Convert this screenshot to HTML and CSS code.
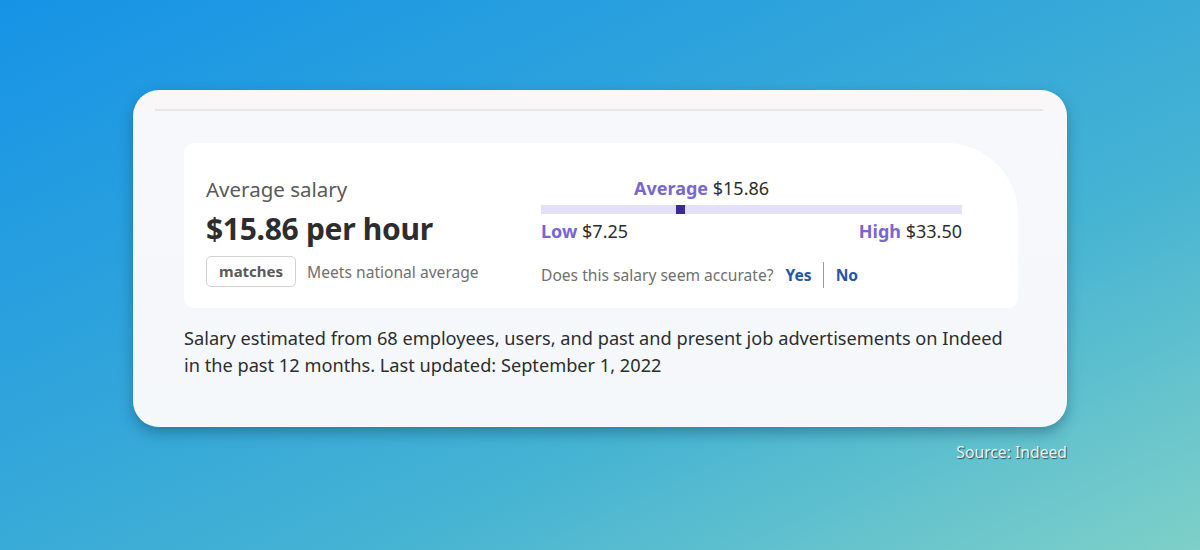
FILE: index.html
```html
<!DOCTYPE html>
<html lang="en">
<head>
    <meta charset="UTF-8">
    <meta name="viewport" content="width=device-width, initial-scale=1.0">
    <title>Average Salary</title>
    <link rel="stylesheet" href="styles.css">
</head>
<body>

    <div class="stage">
        <!-- Salary card -->
        <div class="card">
            <div class="card-rule"></div>

            <div class="salary-box">
                <div class="salary-left">
                    <div class="salary-label">Average salary</div>
                    <div class="salary-value">$15.86 per hour</div>
                    <div class="salary-match">
                        <span class="pill">matches</span>
                        <span class="match-text">Meets national average</span>
                    </div>
                </div>

                <div class="salary-right">
                    <div class="avg-label"><b>Average</b> $15.86</div>
                    <div class="range-bar">
                        <span class="range-marker"></span>
                    </div>
                    <div class="range-ends">
                        <span><b>Low</b> $7.25</span>
                        <span><b>High</b> $33.50</span>
                    </div>
                    <div class="feedback">
                        <span class="feedback-q">Does this salary seem accurate?</span>
                        <a class="feedback-btn">Yes</a>
                        <span class="feedback-sep"></span>
                        <a class="feedback-btn">No</a>
                    </div>
                </div>
            </div>

            <p class="salary-note">Salary estimated from 68 employees, users, and past and present job advertisements on Indeed in the past 12 months. Last updated: September 1, 2022</p>
        </div>

        <div class="source">Source: Indeed</div>
    </div>

</body>
</html>
```

FILE: styles.css
```css
body {
    margin: 0;
    height: 550px;
    overflow: hidden;
    font-family: "Noto Sans", "Open Sans", sans-serif;
    background: linear-gradient(155deg, #1693e6 0%, #2ea3dc 35%, #45b3d3 65%, #7ed0c8 100%);
}
.stage {
    width: 934px;
    margin: 0 auto;
    padding-top: 90px;
}
.card {
    height: 337px;
    box-sizing: border-box;
    background: linear-gradient(180deg, #faf7f7 0px, #f6f8fb 40px, #f5f8fb 100%);
    border-radius: 26px;
    box-shadow: 0 6px 14px rgba(10, 60, 90, 0.4);
    padding: 19px 24px 0 22px;
}
.card-rule {
    height: 2px;
    background: #e9e5e5;
}
.salary-box {
    margin: 32px 25px 0 29px;
    height: 165px;
    box-sizing: border-box;
    background: #fff;
    border-radius: 10px 72px 10px 10px;
    display: flex;
    padding: 33px 0 0 22px;
}
.salary-left {
    width: 335px;
}
.salary-label {
    font-size: 20.5px;
    color: #595959;
    line-height: 26px;
}
.salary-value {
    font-size: 30px;
    font-weight: 700;
    color: #2d2d2d;
    line-height: 42px;
    margin-top: 6px;
    letter-spacing: -0.3px;
}
.salary-match {
    display: flex;
    align-items: center;
    margin-top: 6px;
}
.pill {
    border: 1px solid #d4d2d0;
    border-radius: 5px;
    padding: 4px 12px 5px;
    font-size: 15px;
    font-weight: 700;
    color: #595959;
}
.match-text {
    margin-left: 11px;
    font-size: 15.6px;
    color: #6f6f6f;
}
.salary-right {
    width: 421px;
}
.avg-label {
    padding-left: 93px;
    font-size: 18px;
    line-height: 24px;
    color: #2d2d2d;
}
.avg-label b,
.range-ends b {
    color: #7a66d0;
}
.range-bar {
    position: relative;
    height: 9px;
    margin-top: 5px;
    background: #e4e0f8;
}
.range-marker {
    position: absolute;
    left: 135px;
    top: 0;
    width: 9px;
    height: 9px;
    background: #3b2b8c;
}
.range-ends {
    display: flex;
    justify-content: space-between;
    font-size: 18px;
    line-height: 24px;
    margin-top: 5px;
    color: #2d2d2d;
}
.feedback {
    display: flex;
    align-items: center;
    margin-top: 19px;
    font-size: 15.6px;
}
.feedback-q {
    color: #6f6f6f;
}
.feedback-btn {
    color: #2557a7;
    font-weight: 700;
    margin-left: 12px;
}
.feedback-sep {
    width: 1px;
    height: 26px;
    background: #9a9a9a;
    margin-left: 11px;
}
.salary-note {
    margin: 17px 29px 0 29px;
    font-size: 18.2px;
    line-height: 27px;
    color: #2d2d2d;
}
.source {
    text-align: right;
    margin-top: 14px;
    font-size: 15.7px;
    color: #e9f3f6;
    text-shadow: 1px 1px 1px rgba(0, 0, 0, 0.6);
}
```
